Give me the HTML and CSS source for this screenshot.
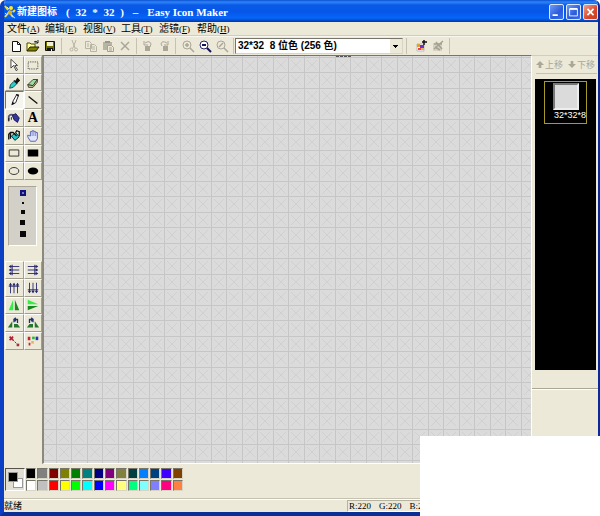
FILE: index.html
```html
<!DOCTYPE html>
<html lang="zh-CN">
<head>
<meta charset="utf-8">
<title>Easy Icon Maker</title>
<link rel="stylesheet" href="styles.css">
</head>
<body>
<div class="window">
  <header class="titlebar">
    <svg class="logo" viewBox="0 0 12 14"><path d="M1 1l3 4M1 12l4-5 4 5M9 7l2-2" stroke="#f6e21a" stroke-width="2" fill="none"/><circle cx="7" cy="3" r="2" fill="#ffea20"/><path d="M5 5l4 1-2 4-3-1z" fill="#dcae21"/><path d="M3 2l2 2M1 8l2 2M8 11l3 2" stroke="#c7e6ff"/></svg>
    <h1 class="title"><span>新建图标</span><span class="title-size">( 32 * 32 )</span><span>–</span><span>Easy Icon Maker</span></h1>
    <div class="winbtns">
      <button class="winbtn" aria-label="最小化"><svg viewBox="0 0 15 15"><path d="M3 10h6v2H3z" fill="#fff"/></svg></button>
      <button class="winbtn" aria-label="最大化"><svg viewBox="0 0 15 15"><path d="M3 4h9v8H3z" fill="none" stroke="#fff"/><path d="M3 3h9v2H3z" fill="#fff"/></svg></button>
      <button class="winbtn close" aria-label="关闭"><svg viewBox="0 0 15 15"><path d="M4 4l7 7M11 4l-7 7" stroke="#fff" stroke-width="2"/></svg></button>
    </div>
  </header>
  <nav class="menubar">
    <button>文件<span>(<u>A</u>)</span></button>
    <button>编辑<span>(<u>E</u>)</span></button>
    <button>视图<span>(<u>V</u>)</span></button>
    <button>工具<span>(<u>T</u>)</span></button>
    <button>滤镜<span>(<u>F</u>)</span></button>
    <button>帮助<span>(<u>H</u>)</span></button>
  </nav>
  <div class="toolbar">
    <div class="group">
      <button aria-label="新建"><svg viewBox="0 0 14 14"><path d="M3.500 2.500h5l3 3v7h-8z" fill="#fff" stroke="#111"/><path d="M8.500 2.500v3h3" fill="none" stroke="#111"/></svg></button>
      <button aria-label="打开"><svg viewBox="0 0 14 14"><path d="M1 12V4h3l1 1h4v3" fill="#ffffa0" stroke="#4a4a00"/><path d="M1 12l3-4h9l-3 4z" fill="#808000" stroke="#222200"/><path d="M8 3q2-2 4 1M12 1v3h-3" fill="none" stroke="#222"/></svg></button>
      <button aria-label="保存"><svg viewBox="0 0 14 14"><path d="M2.500 2.500h9v9h-9z" fill="#707000" stroke="#111"/><path d="M4 3h6v4H4z" fill="#f1efd2"/><path d="M4 9h6v3H4z" fill="#111"/><path d="M8 10h1v2H8z" fill="#eee"/></svg></button>
    </div>
    <div class="group">
      <button aria-label="剪切" disabled><svg viewBox="0 0 14 14"><path d="M5 1l3 8M9 1L6 9" stroke="#b7b4a4" fill="none"/><circle cx="4.500" cy="10.500" r="1.500" fill="none" stroke="#b7b4a4"/><circle cx="9" cy="10.500" r="1.500" fill="none" stroke="#b7b4a4"/></svg></button>
      <button aria-label="复制" disabled><svg viewBox="0 0 14 14"><path d="M1.500 2.500h4l2 2v5h-6zM6.500 5.500h4l2 2v5h-6zM3 5h2M3 7h2M8 8h3M8 10h3" stroke="#b7b4a4" fill="none"/></svg></button>
      <button aria-label="粘贴" disabled><svg viewBox="0 0 14 14"><path d="M2 3h9v8H2z" fill="#b7b4a4"/><path d="M4 2h5v2H4z" fill="#99968a"/><path d="M6.500 6.500h4l2 2v4h-6zM8 9h3M8 11h3" fill="#ece9d8" stroke="#a5a294"/></svg></button>
      <button aria-label="删除" disabled><svg viewBox="0 0 14 14"><path d="M3 3l8 8M11 3l-8 8" stroke="#aaa798" stroke-width="1.500"/></svg></button>
    </div>
    <div class="group narrow">
      <button aria-label="撤销" disabled><svg viewBox="0 0 14 14"><path d="M4 4q5-3 6 1l-1 3M3 2v4h4" stroke="#aaa798" fill="none"/><path d="M4 7h5v5H4z" fill="#aaa798"/></svg></button>
      <button aria-label="重做" disabled><svg viewBox="0 0 14 14"><path d="M10 4Q5 1 4 5l1 2M11 2v4H7" stroke="#aaa798" fill="none"/><path d="M6 7h5v5H6z" fill="#aaa798"/></svg></button>
    </div>
    <div class="group">
      <button aria-label="放大" disabled><svg viewBox="0 0 14 14"><circle cx="6" cy="6" r="4" fill="none" stroke="#aaa798"/><path d="M4 6h4M6 4v4M9 9l4 4" stroke="#aaa798" stroke-width="1.500"/></svg></button>
      <button aria-label="缩小"><svg viewBox="0 0 14 14"><circle cx="6" cy="6" r="4" fill="#fff" stroke="#25256a"/><path d="M4 6h4M9 9l4 4" stroke="#15155a" stroke-width="2"/></svg></button>
      <button aria-label="原始大小" disabled><svg viewBox="0 0 14 14"><circle cx="6" cy="6" r="4" fill="none" stroke="#aaa798"/><path d="M4 8l4-4M9 9l4 4" stroke="#aaa798" stroke-width="1.500"/></svg></button>
    </div>
    <select class="format" aria-label="图标格式"><option>32*32&nbsp; 8 位色 (256 色)</option></select>
    <div class="group last">
      <button aria-label="添加格式"><svg viewBox="0 0 14 14"><path d="M3 5h7v7H3z" fill="#fff" stroke="#bbb"/><path d="M3 5h3v3H3z" fill="#e8a020"/><path d="M6 6h4v4H6z" fill="#7030c0"/><path d="M4 9h3v2H4z" fill="#f04040"/><path d="M7 9h3v2H7z" fill="#e8b040"/><path d="M10 1v5M8 3h5" stroke="#111" stroke-width="1.500"/></svg></button>
      <button aria-label="删除格式" disabled><svg viewBox="0 0 14 14"><path d="M2 4h9v8H2z" fill="#d4d1c1"/><path d="M3 10l9-8M5 3l6 7M3 5h8M4 8l5 3" stroke="#a5a294" stroke-width="1.500"/></svg></button>
    </div>
  </div>
  <main class="main">
    <aside class="tools">
      <div class="toolgrid draw">
        <button aria-label="选择"><svg viewBox="0 0 16 16"><path d="M4.500 1.500v10l3-3 3 6 1.500-1-3-5h3z" fill="#fff" stroke="#333"/></svg></button>
        <button aria-label="矩形选区"><svg viewBox="0 0 16 16"><path d="M2.500 4.500h11v8h-11z" fill="none" stroke="#333" stroke-dasharray="1 1"/></svg></button>
        <button aria-label="取色"><svg viewBox="0 0 16 16"><path d="M3 14l1-4 4-4 3 3-4 4z" fill="#2bd0c8" stroke="#145"/><path d="M8 5l4 4M10 6l2-3 2 2-3 3z" fill="#111" stroke="#111" stroke-width="1.500"/></svg></button>
        <button aria-label="橡皮"><svg viewBox="0 0 16 16"><path d="M2 10l6-6h5l-5 7z" fill="#99e0a0" stroke="#333"/><path d="M2 10l6 1 5-7v3l-5 6H3z" fill="#d4c48b" stroke="#333"/></svg></button>
        <button class="active" aria-label="铅笔"><svg viewBox="0 0 16 16"><path d="M6 13l1-4 4-7 2 1-3 8z" fill="#fff" stroke="#111"/><path d="M5 14l1-4 3 2zM10 2l3 2 1-2-3-1z" fill="#111"/></svg></button>
        <button aria-label="直线"><svg viewBox="0 0 16 16"><path d="M3 4l10 8" stroke="#111" stroke-width="1.500"/></svg></button>
        <button aria-label="喷枪"><svg viewBox="0 0 16 16"><path d="M2 11V6q2-3 6-1" fill="none" stroke="#557" stroke-width="2"/><path d="M6 5l4-2 4 5-2 5-4-3z" fill="#35359a" stroke="#101055"/><path d="M2 8v4M5 7v3" stroke="#111"/></svg></button>
        <button class="letter" aria-label="文字">A</button>
        <button aria-label="渐变填充"><svg viewBox="0 0 16 16"><path d="M5 8l5-4 4 5-5 4z" fill="#20c8ce" stroke="#111"/><path d="M2 12V6l2-2h3l4 4M4 5v6" fill="none" stroke="#111" stroke-width="1.500"/><path d="M10 4l1-2 3 1v5" fill="none" stroke="#111" stroke-width="1.500"/></svg></button>
        <button aria-label="移动"><svg viewBox="0 0 16 16"><path d="M5 14l-3-5V7l3 1V3h2V2h2v1h2v1h2v7l-2 3z" fill="#dfe4ff" stroke="#4b5aa8"/><path d="M7 3v5M9 3v5M11 4v4" stroke="#7c88c8"/></svg></button>
        <button aria-label="矩形"><svg viewBox="0 0 16 16"><path d="M2.500 4.500h11v7h-11z" fill="none" stroke="#222"/></svg></button>
        <button aria-label="实心矩形"><svg viewBox="0 0 16 16"><path d="M2 4h12v8H2z" fill="#000"/></svg></button>
        <button aria-label="椭圆"><svg viewBox="0 0 16 16"><ellipse cx="8" cy="8" rx="5.500" ry="4" fill="none" stroke="#222"/></svg></button>
        <button aria-label="实心椭圆"><svg viewBox="0 0 16 16"><ellipse cx="8" cy="8" rx="6" ry="4" fill="#000"/></svg></button>
      </div>
      <div class="sizes">
        <button class="s1" aria-label="画笔 1"></button><button class="s2" aria-label="画笔 2"></button><button class="s3" aria-label="画笔 3"></button><button class="s4" aria-label="画笔 4"></button><button class="s5" aria-label="画笔 5"></button>
      </div>
      <div class="toolgrid move">
        <button aria-label="左移"><svg viewBox="0 0 16 16"><path d="M3 4h11M3 8h11M3 12h11M6 2v12" stroke="#25256e" fill="none"/><path d="M2 4l3-2v4zM2 8l3-2v4zM2 12l3-2v4z" fill="#25256e"/></svg></button>
        <button aria-label="右移"><svg viewBox="0 0 16 16"><path d="M2 4h11M2 8h11M2 12h11M10 2v12" stroke="#25256e" fill="none"/><path d="M14 4l-3-2v4zM14 8l-3-2v4zM14 12l-3-2v4z" fill="#25256e"/></svg></button>
        <button aria-label="上移"><svg viewBox="0 0 16 16"><path d="M4 3v11M8 3v11M12 3v11M2 6h12" stroke="#25256e"/><path d="M4 2L2 5h4zM8 2L6 5h4zM12 2l-2 3h4z" fill="#25256e"/></svg></button>
        <button aria-label="下移"><svg viewBox="0 0 16 16"><path d="M4 2v11M8 2v11M12 2v11M2 10h12" stroke="#25256e"/><path d="M4 14l-2-3h4zM8 14l-2-3h4zM12 14l-2-3h4z" fill="#25256e"/></svg></button>
        <button aria-label="水平翻转"><svg viewBox="0 0 16 16"><path d="M7 2v12H2z" fill="#35ee45"/><path d="M9 2v12h5z" fill="#188620"/></svg></button>
        <button aria-label="垂直翻转"><svg viewBox="0 0 16 16"><path d="M2 2l12 5H2z" fill="#35ee45"/><path d="M2 9h12L2 14z" fill="#188620"/></svg></button>
        <button aria-label="左旋"><svg viewBox="0 0 16 16"><path d="M6 6v7H1zM8 9h4l3 4H8z" fill="#23752f"/><path d="M8 7V4h4v4M10 2L8 4l2 2" stroke="#203070" fill="none" stroke-width="1.500"/></svg></button>
        <button aria-label="右旋"><svg viewBox="0 0 16 16"><path d="M10 6v7h5zM8 9H4l-3 4h7z" fill="#23752f"/><path d="M8 7V4H4v4M6 2l2 2-2 2" stroke="#203070" fill="none" stroke-width="1.500"/></svg></button>
        <button aria-label="缩放"><svg viewBox="0 0 16 16"><path d="M3 3l4 4M7 3L3 7" stroke="#b32037" stroke-width="2"/><path d="M7 7l5 5" stroke="#333" stroke-dasharray="2 1"/><path d="M11 11h3v3h-3z" fill="#a03040"/></svg></button>
        <button aria-label="颜色替换"><svg viewBox="0 0 16 16"><path d="M2 3h3v4H2zM3 10h2v3H3z" fill="#d02020"/><path d="M7 3h3v3H7z" fill="#24b83a"/><path d="M11 3h3v4h-3z" fill="#2633b8"/><path d="M6 8h3v3H6z" fill="#e8b070"/></svg></button>
      </div>
    </aside>
    <section class="canvas" aria-label="画布">
      <svg class="pixels" width="100%" height="100%">
        <defs><pattern id="cells" width="31" height="31" x="12" y="1" patternUnits="userSpaceOnUse">
          <path d="M0 0h31v31H0z" fill="#dbdbdb"/>
          <path d="M3 3l10 10M13 3L3 13M18 3l10 10M28 3L18 13M3 18l10 10M13 18L3 28M18 18l10 10M28 18L18 28" stroke="#d0d0d0" fill="none"/>
          <path d="M0 0h31v1H0zM0 15h31v1H0zM0 0h1v31H0zM15 0h1v31h-1z" fill="#c6c6c6"/>
        </pattern></defs>
        <rect width="100%" height="100%" fill="url(#cells)"/>
      </svg>
      <span class="grip"></span>
    </section>
    <aside class="formats">
      <div class="reorder">
        <button disabled><svg viewBox="0 0 9 9"><path d="M4.500 0L9 4.500H6V8H3V4.500H0z" fill="#aaa798"/></svg>上移</button>
        <button disabled><svg viewBox="0 0 9 9"><path d="M4.500 8L9 3.500H6V0H3v3.500H0z" fill="#aaa798"/></svg>下移</button>
      </div>
      <div class="list"><button class="item"><span class="thumb"></span><span class="name">32*32*8</span></button></div>
      <div class="foot"></div>
      <div class="preview"></div>
    </aside>
  </main>
  <section class="palette">
    <div class="current"><span class="back"></span><span class="fore"></span></div>
    <div class="swatches">
      <button aria-label="黑"></button><button aria-label="灰"></button><button aria-label="深红"></button><button aria-label="橄榄"></button><button aria-label="绿"></button><button aria-label="青绿"></button><button aria-label="深蓝"></button><button aria-label="紫"></button><button aria-label="土黄"></button><button aria-label="墨绿"></button><button aria-label="天蓝"></button><button aria-label="海蓝"></button><button aria-label="蓝紫"></button><button aria-label="棕"></button>
      <button aria-label="白"></button><button aria-label="浅灰"></button><button aria-label="红"></button><button aria-label="黄"></button><button aria-label="亮绿"></button><button aria-label="青"></button><button aria-label="蓝"></button><button aria-label="品红"></button><button aria-label="浅黄"></button><button aria-label="春绿"></button><button aria-label="浅青"></button><button aria-label="淡紫"></button><button aria-label="玫红"></button><button aria-label="橙"></button>
    </div>
  </section>
  <footer class="status"><span class="ready">就绪</span><div class="rgb"><span>R:220</span><span>G:220</span><span>B:220</span></div></footer>
</div>
<div class="cover"></div>
</body>
</html>
```
FILE: styles.css
```css
* { box-sizing: border-box; }
body { margin: 0; background: #fff; }
button { margin: 0; padding: 0; border: 0; background: none; font: inherit; color: inherit; }
svg { display: block; }

.window {
  display: flex;
  flex-direction: column;
  height: 100vh;
  overflow: hidden;
  border: solid #0b3fc4;
  border-width: 0 2px 4px 4px;
  border-right-color: #0a2a9c;
  border-bottom-color: #0a3096;
  border-radius: 6px 6px 0 0;
  background: #ece9d8;
  font: 10px/12px "Liberation Sans", "Noto Sans CJK SC", sans-serif;
  color: #000;
}

.titlebar {
  flex: none;
  display: flex;
  align-items: center;
  height: 22px;
  margin-left: -4px;
  padding: 2px 0 0 4px;
  background: linear-gradient(#0a4fd0 0, #2f86fa 2px, #0a5ae6 5px, #0557e8 12px, #0665f8 18px, #0550d4 20px, #0334a0 22px);
  color: #fff;
}
.logo { width: 12px; height: 14px; }
.title {
  flex: 1;
  display: flex;
  gap: 9px;
  margin: 0 0 0 1px;
  font: bold 11px/14px "Liberation Serif", "Noto Sans CJK SC", serif;
  white-space: pre;
}
.title span:first-child { font-size: 10px; }
.title-size { word-spacing: 3px; }
.winbtns { display: flex; gap: 2px; }
.winbtn {
  width: 15px;
  height: 16px;
  border: 1px solid #dce8ff;
  border-radius: 2px;
  background: linear-gradient(135deg, #6f9cf4, #2a5bdc 60%, #3a70ee);
}
.winbtn svg { width: 13px; height: 14px; }
.close { background: linear-gradient(135deg, #f0a08a, #d8482a 60%, #c84020); }

.menubar {
  flex: none;
  display: flex;
  height: 14px;
  padding-left: 3px;
  border-bottom: 1px solid #d0cdbb;
}
.menubar button { width: 38px; text-align: left; white-space: nowrap; }
.menubar span { font: 9px/12px "Liberation Serif", serif; }

.toolbar {
  flex: none;
  display: flex;
  align-items: center;
  height: 19px;
  border-top: 1px solid #f8f7ef;
}
.group { display: flex; padding: 0 3px; border-right: 1px solid #c5c2b2; }
.group button { width: 17px; height: 16px; display: grid; place-items: center; }
.group svg { width: 14px; height: 14px; }
.group.last { padding-left: 5px; border-left: 1px solid #c5c2b2; }
.narrow button { width: 16px; }
.format {
  appearance: none;
  width: 168px;
  height: 16px;
  margin: 0 3px 0 1px;
  padding: 0 0 0 2px;
  border: 1px solid;
  border-color: #77756a #d8d5c5 #d8d5c5 #77756a;
  border-radius: 0;
  background: linear-gradient(#000, #000) right 4px top 6px / 5px 1px no-repeat,
    linear-gradient(#000, #000) right 5px top 7px / 3px 1px no-repeat,
    linear-gradient(#000, #000) right 6px top 8px / 1px 1px no-repeat,
    linear-gradient(90deg, #ece9d8, #ece9d8) right / 12px 100% no-repeat, #fff;
  color: #000;
  font: bold 10px/14px "Liberation Sans", "Noto Sans CJK SC", sans-serif;
}

.main { flex: 1; display: flex; min-height: 0; }
.tools { width: 38px; flex: none; border-top: 1px solid #c8c5b5; }
.toolgrid { display: grid; grid-template-columns: 1fr 1fr; grid-auto-rows: 1fr; margin-left: 1px; }
.draw { height: 124px; }
.move { height: 89px; }
.toolgrid button {
  display: grid;
  place-items: center;
  min-height: 0;
  border: 1px solid;
  border-color: #fff #a19e90 #a19e90 #fff;
}
.toolgrid svg { width: 14px; height: 14px; }
.toolgrid .active { background: #f6f5ee; border-color: #77756a #fff #fff #77756a; }
.toolgrid .letter { font: bold 14px/14px "Liberation Serif", serif; }
.sizes {
  display: flex;
  flex-direction: column;
  align-items: center;
  width: 29px;
  height: 60px;
  margin: 6px 4px 15px;
  padding-top: 3px;
  gap: 6px;
  border: 1px solid;
  border-color: #aaa798 #fff #fff #aaa798;
  background: #d3d0c7;
}
.sizes button { flex: none; background: #080808; }
.sizes .s1 { width: 6px; height: 6px; border: 2px solid #11117c; background: #7a7ab8; }
.sizes .s2 { width: 2px; height: 2px; }
.sizes .s3 { width: 4px; height: 4px; }
.sizes .s4 { width: 5px; height: 5px; }
.sizes .s5 { width: 6px; height: 6px; }

.canvas {
  position: relative;
  flex: 1;
  min-width: 0;
  border: solid;
  border-width: 1px 1px 1px 2px;
  border-color: #77756a #fff #fff #8b887c;
}
.grip { position: absolute; left: 60%; top: 0; width: 15px; border-top: 1px dashed #555; }

.formats { width: 66px; flex: none; display: flex; flex-direction: column; border-top: 1px solid #d0cdbb; }
.reorder { display: flex; gap: 5px; height: 18px; margin: 0 1px 5px 4px; border-bottom: 1px solid #c5c2b2; }
.reorder button { display: flex; align-items: center; gap: 1px; color: #aaa798; white-space: nowrap; font-size: 9px; }
.reorder svg { width: 8px; height: 8px; }
.list { flex: 1; margin: 0 2px 0 3px; padding: 2px 9px; background: #000; }
.item {
  display: flex;
  flex-direction: column;
  align-items: center;
  width: 43px;
  height: 43px;
  padding-top: 1px;
  border: 1px solid #a89a28;
  color: #fff;
  font-size: 9px;
  line-height: 10px;
}
.thumb { width: 26px; height: 27px; border: 2px solid #777; border-right-color: #eee; border-bottom-color: #eee; background: #dbdbdb; }
.name { align-self: flex-end; }
.foot { height: 19px; border-bottom: 1px solid #aaa798; }
.preview { height: 75px; border-top: 1px solid #fff; }

.palette {
  flex: none;
  display: flex;
  align-items: flex-start;
  height: 35px;
  padding: 4px 0 0 1px;
  border-bottom: 1px solid #c5c2b2;
}
.current {
  position: relative;
  width: 20px;
  height: 23px;
  margin-right: 1px;
  border: 1px solid;
  border-color: #55534a #fff #fff #55534a;
  background: #e2dfd2;
}
.fore, .back { position: absolute; width: 10px; height: 10px; border: 1px solid #999; }
.fore { left: 2px; top: 3px; background: #000; }
.back { right: 1px; bottom: 2px; background: #fff; }
.swatches { display: grid; grid-template-columns: repeat(14, 1fr); grid-auto-rows: 12px; width: 158px; }
.swatches button { margin: 0 1px 1px 0; border: 1px solid; border-color: #77756a #d8d5c5 #d8d5c5 #77756a; }
.swatches :nth-child(1) { background: #000; }
.swatches :nth-child(2) { background: #808080; }
.swatches :nth-child(3) { background: #800000; }
.swatches :nth-child(4) { background: #808000; }
.swatches :nth-child(5) { background: #008000; }
.swatches :nth-child(6) { background: #008080; }
.swatches :nth-child(7) { background: #000080; }
.swatches :nth-child(8) { background: #800080; }
.swatches :nth-child(9) { background: #808040; }
.swatches :nth-child(10) { background: #004040; }
.swatches :nth-child(11) { background: #0080ff; }
.swatches :nth-child(12) { background: #004080; }
.swatches :nth-child(13) { background: #4000ff; }
.swatches :nth-child(14) { background: #804000; }
.swatches :nth-child(15) { background: #fff; }
.swatches :nth-child(16) { background: #c0c0c0; }
.swatches :nth-child(17) { background: #f00; }
.swatches :nth-child(18) { background: #ff0; }
.swatches :nth-child(19) { background: #0f0; }
.swatches :nth-child(20) { background: #0ff; }
.swatches :nth-child(21) { background: #00f; }
.swatches :nth-child(22) { background: #f0f; }
.swatches :nth-child(23) { background: #ffff80; }
.swatches :nth-child(24) { background: #00ff80; }
.swatches :nth-child(25) { background: #80ffff; }
.swatches :nth-child(26) { background: #8080ff; }
.swatches :nth-child(27) { background: #ff0080; }
.swatches :nth-child(28) { background: #ff8040; }

.status { flex: none; display: flex; justify-content: space-between; height: 13px; border-top: 1px solid #fff; font-size: 9px; }
.rgb {
  display: flex;
  gap: 8px;
  width: 251px;
  padding-left: 1px;
  border: 1px solid;
  border-color: #b5b2a2 #fff #fff #b5b2a2;
  font: 9px/10px "Liberation Serif", serif;
}

.cover { position: absolute; left: 420px; top: 436px; right: 0; bottom: 0; background: #fff; }
```
